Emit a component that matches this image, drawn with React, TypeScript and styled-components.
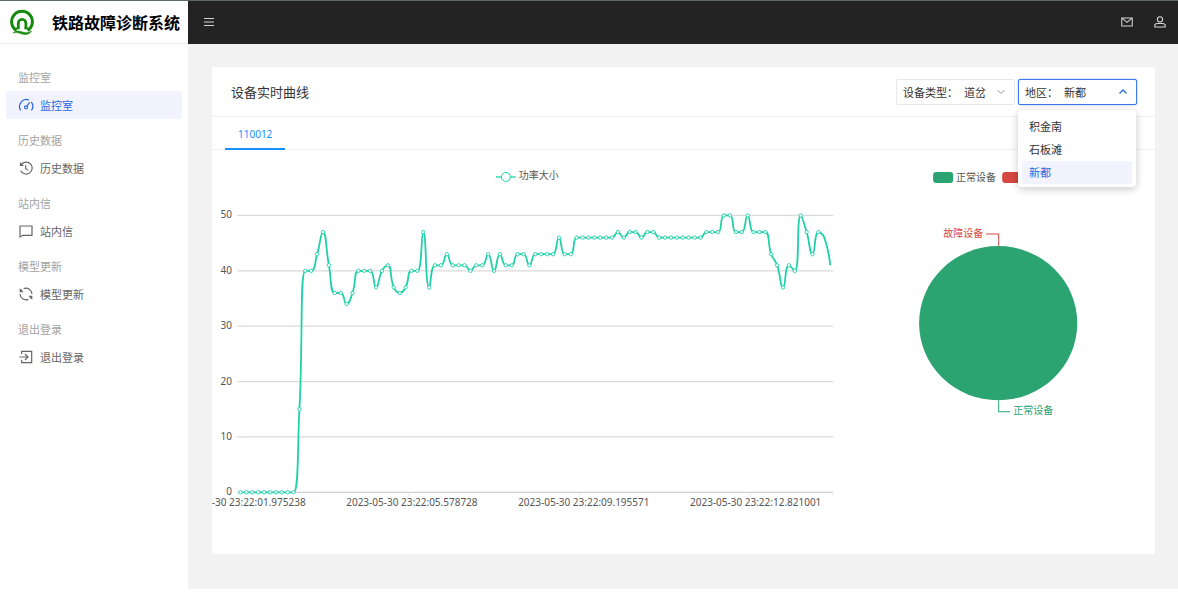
import React from 'react';
import styled, { createGlobalStyle, css } from 'styled-components';

const GlobalStyle = createGlobalStyle`
  *, *::before, *::after { box-sizing: border-box; }
  body {
    margin: 0;
    background: #fff;
    color: #333;
    font-family: "Noto Sans", "Noto Sans CJK SC", sans-serif;
    font-size: 11px;
    line-height: 16px;
  }
  ul { margin: 0; padding: 0; list-style: none; }
  h1, h2, h3 { margin: 0; }
  button, select { font: inherit; color: inherit; }
`;

const cjk = css`
  font-family: "Noto Sans CJK SC", "Noto Sans", sans-serif;
`;

const Page = styled.div`
  display: flex;
  flex-direction: column;
  min-height: 100vh;
  padding-bottom: 6px;
`;

const TopBar = styled.header`
  display: flex;
  height: 44px;
  border-top: 1px solid #5d6b5e;
`;

const Brand = styled.div`
  display: flex;
  align-items: center;
  flex: 0 0 188px;
  gap: 16px;
  padding-left: 8px;
  background: #fff;
  border-bottom: 1px solid #ececec;
`;

const BrandName = styled.h1`
  ${cjk}
  font-size: 16px;
  line-height: 24px;
  font-weight: 700;
  color: #000;
  white-space: nowrap;
`;

const NavStrip = styled.div`
  display: flex;
  flex: 1;
  align-items: center;
  justify-content: space-between;
  padding: 0 11px 1px 14px;
  background: #232324;
`;

const NavActions = styled.div`
  display: flex;
  gap: 19px;
`;

const IconButton = styled.button`
  display: flex;
  width: 14px;
  height: 14px;
  padding: 0;
  border: 0;
  background: none;
  color: #d4d4d4;
`;

const Body = styled.div`
  display: flex;
  flex: 1;
`;

const Sidebar = styled.nav`
  display: flex;
  flex-direction: column;
  flex: 0 0 188px;
  gap: 7px;
  padding: 19px 6px;
  background: #fff;
`;

const GroupTitle = styled.h3`
  ${cjk}
  padding: 6px 12px;
  font-size: 11px;
  line-height: 16px;
  font-weight: 400;
  color: #a3a3a3;
`;

const MenuLink = styled.a<{ $active?: boolean }>`
  ${cjk}
  display: flex;
  align-items: center;
  gap: 6px;
  height: 28px;
  padding: 0 12px;
  border-radius: 2px;
  color: ${p => (p.$active ? '#2a68dc' : '#666')};
  background: ${p => (p.$active ? '#f2f3ff' : 'transparent')};
  text-decoration: none;
`;

const Content = styled.main`
  flex: 1;
  min-width: 0;
  padding: 23px 23px 35px 24px;
  background: #f2f2f2;
`;

const Card = styled.section`
  background: #fff;
  border-radius: 2px;
`;

const CardHeader = styled.div`
  display: flex;
  align-items: center;
  justify-content: space-between;
  height: 50px;
  padding: 0 18px 0 19px;
  border-bottom: 1px solid #f0f0f0;
`;

const CardTitle = styled.h2`
  ${cjk}
  font-size: 13px;
  line-height: 20px;
  font-weight: 400;
`;

const Filters = styled.div`
  display: flex;
  gap: 3px;
`;

const SelectBox = styled.div<{ $open?: boolean }>`
  ${cjk}
  position: relative;
  display: flex;
  align-items: center;
  width: 119px;
  height: 26px;
  padding: 0 8px 0 6px;
  border: 1px solid ${p => (p.$open ? '#3d78ea' : '#e8e8e8')};
  border-radius: 2px;
  background: #fff;
  box-shadow: ${p => (p.$open ? '0 0 2px #8db1f5' : 'none')};
  color: #333;

  label { white-space: nowrap; }

  select {
    flex: 1;
    min-width: 0;
    height: 20px;
    margin-left: 6px;
    padding: 0;
    border: 0;
    outline: 0;
    background: none;
    appearance: none;
  }
`;

const Options = styled.ul`
  position: absolute;
  z-index: 2;
  top: 30px;
  left: -1px;
  width: 118px;
  padding: 5px 4px 3px;
  border-radius: 4px;
  background: #fff;
  box-shadow: 0 2px 8px rgba(0, 0, 0, 0.22);
`;

const Option = styled.li<{ $selected?: boolean }>`
  height: 23px;
  padding: 0 7px;
  border-radius: 2px;
  line-height: 23px;
  color: ${p => (p.$selected ? '#2a68dc' : '#333')};
  background: ${p => (p.$selected ? '#f2f3ff' : 'transparent')};
`;

const TabList = styled.div`
  display: flex;
  height: 33px;
  padding-left: 13px;
  border-bottom: 1px solid #f0f0f0;
`;

const Tab = styled.button`
  height: 33px;
  padding: 2px 13px 0;
  border: 0;
  border-bottom: 2px solid #1890ff;
  background: none;
  font-size: 10px;
  color: #1890ff;
`;

const Charts = styled.div`
  display: grid;
  grid-template-columns: 2fr 1fr;
  align-items: start;
  padding-bottom: 14px;
`;

const Drawing = styled.svg`
  display: block;
  width: 100%;
  height: auto;
  font-size: 10px;
  text { fill: #555; }
`;

const SliceLabel = styled.text<{ $tone: string }>`
  && { fill: ${p => p.$tone}; }
`;

const Stroke = ({ size = 14, children }: { size?: number; children: React.ReactNode }) => (
  <svg width={size} height={size} viewBox="0 0 24 24" fill="none" stroke="currentColor" strokeWidth="1.8" aria-hidden="true">
    {children}
  </svg>
);

const GaugeIcon = () => (
  <Stroke size={16}>
    <path d="M4 20A10.500 10.500 0 0 1 16.500 4.500M19.800 7.200A10.500 10.500 0 0 1 20 20" />
    <circle cx="12" cy="15.500" r="2.300" />
    <path d="M13.300 13.600L17.500 8" />
  </Stroke>
);
const HistoryIcon = () => (
  <Stroke size={16}>
    <path d="M5 6.8A9 9 0 1 1 4 15.6" />
    <path d="M3 3v6h6z" fill="currentColor" stroke="none" />
    <path d="M11.5 8v4.6l3.6 3" />
  </Stroke>
);
const MessageIcon = () => (
  <Stroke size={16}>
    <path d="M3 4.500h18v14H7l-4 2.500z" />
  </Stroke>
);
const RefreshIcon = () => (
  <Stroke size={16}>
    <path d="M8.500 4A9 9 0 0 1 21 12M15.500 20A9 9 0 0 1 3 12M4.500 7.500A9 9 0 0 1 6 5.500M19.500 16.500A9 9 0 0 1 18 18.500" />
    <path d="M2.500 3.500v6h6zM21.500 20.500v-6h-6z" fill="currentColor" stroke="none" />
  </Stroke>
);
const LeaveIcon = () => (
  <Stroke size={16}>
    <path d="M5.500 7.500v-4h15v17h-15v-4M2 12h12.500M10.500 7.500l4.500 4.500-4.500 4.500" />
  </Stroke>
);
const MenuIcon = () => (
  <Stroke>
    <path d="M3.500 6h17M3.500 12h17M3.500 18h17" />
  </Stroke>
);
const MailIcon = () => (
  <Stroke>
    <path d="M3 5h18v14H3zM3.500 5.500l8.500 7 8.500-7" />
  </Stroke>
);
const UserIcon = () => (
  <Stroke>
    <circle cx="12" cy="7.500" r="4.500" />
    <path d="M3 20.500v-2c0-2.500 2-4 4.500-4h9c2.500 0 4.500 1.500 4.500 4v2z" />
  </Stroke>
);
const ChevronDown = () => (
  <svg width="10" height="10" viewBox="0 0 10 10" fill="none" stroke="#999" aria-hidden="true">
    <path d="M1.500 3L5 6.500 8.500 3" />
  </svg>
);
const ChevronUp = () => (
  <svg width="10" height="10" viewBox="0 0 10 10" fill="none" stroke="#2a68dc" strokeWidth="1.300" aria-hidden="true">
    <path d="M1.500 6.500L5 3 8.500 6.500" />
  </svg>
);

const Logo = () => (
  <svg width="28" height="28" viewBox="0 0 28 28" fill="none" stroke="#158a0d" aria-hidden="true">
    <path d="M8.500 22.600A10.400 10.400 0 1 1 19.500 22.600" strokeWidth="3" />
    <path d="M10.300 20.500v-5.300a3.800 3.800 0 0 1 7.600 0v5.300" strokeWidth="2.800" />
    <path d="M7.500 20.300h4M16.500 20.300h4" strokeWidth="1.800" />
    <path d="M5 24.800c3.500-2.600 6-1.900 9-.9s6 1.400 9.500-.9c-2 3.600-6 3.900-9.500 2.900s-6-1.600-9-1.100z" fill="#158a0d" strokeWidth=".6" />
  </svg>
);

const menu = [
  { title: '监控室', Icon: GaugeIcon, active: true },
  { title: '历史数据', Icon: HistoryIcon },
  { title: '站内信', Icon: MessageIcon },
  { title: '模型更新', Icon: RefreshIcon },
  { title: '退出登录', Icon: LeaveIcon },
];

const regions = ['积金南', '石板滩', '新都'];

const power = [
  0, 0, 0, 0, 0, 0, 0, 0, 0, 0, 15, 40, 40, 43, 47, 41, 36, 36, 34, 36,
  40, 40, 40, 37, 40, 41, 37, 36, 37, 40, 40, 47, 37, 41, 41, 43, 41, 41, 41, 40,
  41, 41, 43, 40, 43, 41, 41, 43, 43, 41, 43, 43, 43, 43, 46, 43, 43, 46, 46, 46,
  46, 46, 46, 46, 47, 46, 47, 47, 46, 47, 47, 46, 46, 46, 46, 46, 46, 46, 46, 47,
  47, 47, 50, 50, 47, 47, 50, 47, 47, 47, 43, 41, 37, 41, 40, 50, 47, 43, 47, 46, 41,
];

const AXIS = { left: 25.5, right: 621.5, zero: 342.5, top: 65.5 };
const band = (AXIS.right - AXIS.left) / power.length;
const yOf = (value: number) => AXIS.zero - (value * (AXIS.zero - AXIS.top)) / 50;

type Point = [number, number];
const points = power.map((value, i): Point => [AXIS.left + band * (i + 0.5), yOf(value)]);

const clamp = (v: number, a: number, b: number) => Math.max(Math.min(a, b), Math.min(Math.max(a, b), v));

/* Cubic path whose control points never leave the box of their segment. */
function smoothPath(pts: Point[]) {
  let d = `M${pts[0][0]} ${pts[0][1]}`;
  let out: Point = pts[0];
  for (let i = 1; i < pts.length; i++) {
    const [px, py] = pts[i - 1];
    const [x, y] = pts[i];
    let into: Point = [x, y];
    let nextOut: Point = [x, y];
    if (i < pts.length - 1) {
      const [nx, ny] = pts[i + 1];
      const prevLen = Math.hypot(x - px, y - py);
      const nextLen = Math.hypot(nx - x, ny - y);
      const ratio = nextLen / (nextLen + prevLen);
      const ox = clamp(x + (nx - px) * 0.5 * ratio, x, nx);
      const oy = clamp(y + (ny - py) * 0.5 * ratio, y, ny);
      const ix = clamp(x - ((ox - x) * prevLen) / nextLen, px, x);
      const iy = clamp(y - ((oy - y) * prevLen) / nextLen, py, y);
      into = [ix, iy];
      nextOut = [x + ((x - ix) * nextLen) / prevLen, y + ((y - iy) * nextLen) / prevLen];
    }
    d += `C${[...out, ...into, x, y].map(n => n.toFixed(2)).join(' ')}`;
    out = nextOut;
  }
  return d;
}

const timeLabels = [
  '2023-05-30 23:22:01.975238',
  '2023-05-30 23:22:05.578728',
  '2023-05-30 23:22:09.195571',
  '2023-05-30 23:22:12.821001',
];

const LineChart = () => (
  <Drawing viewBox="0 0 629 390" role="img" aria-label="功率大小">
    <g stroke="#1fd1a9" fill="#fff">
      <path d="M284 27h20" strokeWidth="1.300" />
      <circle cx="294" cy="27" r="4.500" />
    </g>
    <text x="307" y="29">功率大小</text>
    {[0, 10, 20, 30, 40, 50].map(v => (
      <g key={v}>
        <path d={`M${AXIS.left} ${yOf(v)}H${AXIS.right}`} stroke={v === 0 ? '#d0d0d0' : '#dadada'} strokeWidth="1.300" />
        <text x="20" y={yOf(v) + 3} textAnchor="end">{v}</text>
      </g>
    ))}
    <path d="M196.500 343v4M367.500 343v4M538.500 343v4M621.500 343v4" stroke="#eee" />
    {timeLabels.map((label, i) => (
      <text key={label} x={28 + i * 172} y="356" textAnchor="middle">{label}</text>
    ))}
    <path d={smoothPath(points)} fill="none" stroke="#1fd1a9" strokeWidth="1.800" />
    {points.slice(0, -2).map(([x, y]) => (
      <circle key={x} cx={x} cy={y} r="1.700" fill="#fff" stroke="#1fd1a9" strokeWidth=".9" />
    ))}
  </Drawing>
);

const PieChart = () => (
  <Drawing viewBox="0 0 314 390" role="img" aria-label="设备状态">
    <rect x="92" y="22" width="20" height="11" rx="3" fill="#2ba471" />
    <text x="115" y="31">正常设备</text>
    <rect x="161" y="22" width="20" height="11" rx="3" fill="#d54941" />
    <text x="184" y="31">故障设备</text>
    <ellipse cx="157" cy="173" rx="79" ry="77" fill="#2ba471" />
    <path d="M145 84h12.500v12" fill="none" stroke="#d54941" />
    <SliceLabel $tone="#d54941" x="142" y="87" textAnchor="end">故障设备</SliceLabel>
    <path d="M157.500 250v11.500H169" fill="none" stroke="#2ba471" />
    <SliceLabel $tone="#2ba471" x="172" y="264">正常设备</SliceLabel>
  </Drawing>
);

export default function App() {
  return (
    <Page>
      <GlobalStyle />
      <TopBar>
        <Brand>
          <Logo />
          <BrandName>铁路故障诊断系统</BrandName>
        </Brand>
        <NavStrip>
          <IconButton aria-label="菜单"><MenuIcon /></IconButton>
          <NavActions>
            <IconButton aria-label="站内信"><MailIcon /></IconButton>
            <IconButton aria-label="用户"><UserIcon /></IconButton>
          </NavActions>
        </NavStrip>
      </TopBar>
      <Body>
        <Sidebar>
          {menu.map(({ title, Icon, active }) => (
            <div key={title}>
              <GroupTitle>{title}</GroupTitle>
              <MenuLink href="#" $active={active}>
                <Icon />
                {title}
              </MenuLink>
            </div>
          ))}
        </Sidebar>
        <Content>
          <Card>
            <CardHeader>
              <CardTitle>设备实时曲线</CardTitle>
              <Filters>
                <SelectBox>
                  <label htmlFor="device">设备类型：</label>
                  <select id="device" defaultValue="道岔">
                    <option>道岔</option>
                  </select>
                  <ChevronDown />
                </SelectBox>
                <SelectBox $open>
                  <label htmlFor="region">地区：</label>
                  <select id="region" defaultValue="新都">
                    {regions.map(r => <option key={r}>{r}</option>)}
                  </select>
                  <ChevronUp />
                  <Options role="listbox" aria-label="地区">
                    {regions.map(r => (
                      <Option key={r} role="option" aria-selected={r === '新都'} $selected={r === '新都'}>{r}</Option>
                    ))}
                  </Options>
                </SelectBox>
              </Filters>
            </CardHeader>
            <TabList role="tablist">
              <Tab role="tab" aria-selected="true">110012</Tab>
            </TabList>
            <Charts>
              <LineChart />
              <PieChart />
            </Charts>
          </Card>
        </Content>
      </Body>
    </Page>
  );
}
